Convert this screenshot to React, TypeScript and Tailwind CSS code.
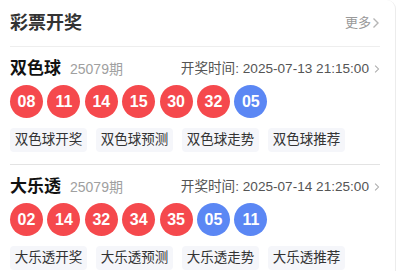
import React from "react";

type Draw = {
  name: string;
  issue: string;
  time: string;
  red: string[];
  blue: string[];
  links: string[];
};

const draws: Draw[] = [
  {
    name: "双色球",
    issue: "25079期",
    time: "2025-07-13 21:15:00",
    red: ["08", "11", "14", "15", "30", "32"],
    blue: ["05"],
    links: ["双色球开奖", "双色球预测", "双色球走势", "双色球推荐"],
  },
  {
    name: "大乐透",
    issue: "25079期",
    time: "2025-07-14 21:25:00",
    red: ["02", "14", "32", "34", "35"],
    blue: ["05", "11"],
    links: ["大乐透开奖", "大乐透预测", "大乐透走势", "大乐透推荐"],
  },
];

const Chevron: React.FC<{ className?: string }> = ({ className }) => (
  <svg viewBox="0 0 8 12" className={className} fill="none" stroke="currentColor" strokeWidth="1.4">
    <path d="M1.5 1.5 6 6l-4.5 4.5" />
  </svg>
);

const Ball: React.FC<{ n: string; blue?: boolean }> = ({ n, blue }) => (
  <span
    className={`flex h-[33px] w-[33px] items-center justify-center rounded-full text-[16px] font-bold text-white ${
      blue ? "bg-[#5b87f4]" : "bg-[#f5494d]"
    }`}
  >
    {n}
  </span>
);

const DrawBlock: React.FC<{ d: Draw; last?: boolean }> = ({ d, last }) => (
  <section className={`pt-[12px] ${last ? "" : "pb-[12px] border-b border-[#e3e3e3]"}`}>
    <div className="flex h-[20px] items-center">
      <span className="text-[17px] font-bold text-[#111]">{d.name}</span>
      <span className="ml-[9px] text-[14px] text-[#a0a0a0]">{d.issue}</span>
      <span className="ml-auto text-[13.6px] text-[#555]">开奖时间: {d.time}</span>
      <Chevron className="ml-[5px] h-[10px] w-[6px] text-[#aaa]" />
    </div>
    <div className="mt-[6px] flex gap-[4.4px]">
      {d.red.map((n, i) => (
        <Ball key={"r" + i} n={n} />
      ))}
      {d.blue.map((n, i) => (
        <Ball key={"b" + i} n={n} blue />
      ))}
    </div>
    <div className="mt-[10px] flex gap-[9px]">
      {d.links.map((l) => (
        <span key={l} className="flex h-[24px] w-[77px] items-center justify-center rounded-[4px] bg-[#f5f6fa] text-[13.5px] text-[#333]">
          {l}
        </span>
      ))}
    </div>
  </section>
);

export default function App() {
  return (
    <div className="h-[271px] w-[402px] overflow-hidden bg-white font-['Liberation_Sans','Noto_Sans_CJK_SC',sans-serif]">
      <div className="h-full w-[396px] rounded-tr-[9px] border-r border-[#ececec] bg-white pl-[10px] pr-[15px]">
        <header className="flex h-[47px] items-center border-b border-[#eeeeee]">
          <h2 className="text-[18px] font-bold text-[#333]">彩票开奖</h2>
          <span className="ml-auto flex items-center text-[13px] text-[#999]">
            更多
            <Chevron className="ml-[1px] h-[12px] w-[8px] text-[#b5b5b5]" />
          </span>
        </header>
        {draws.map((d, i) => (
          <DrawBlock key={d.name} d={d} last={i === draws.length - 1} />
        ))}
      </div>
    </div>
  );
}
